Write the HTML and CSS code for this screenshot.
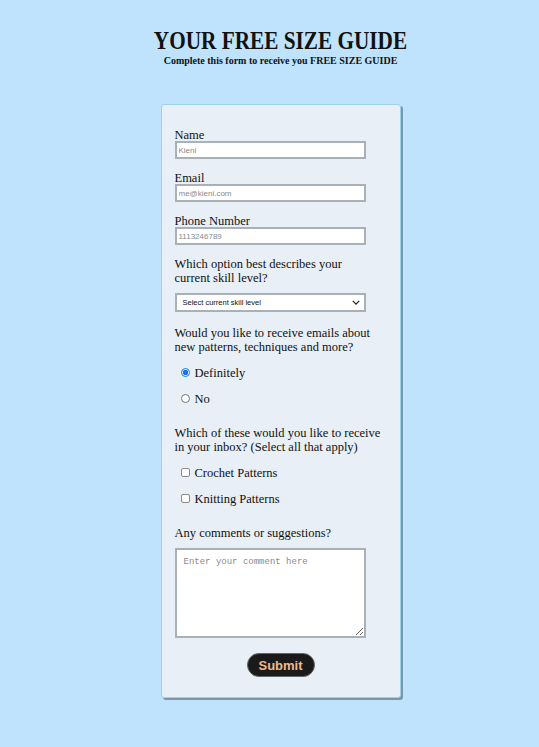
FILE: index.html
```html
<!DOCTYPE html>
<html lang="en">
<head>
<meta charset="utf-8">
<title>Free Size Guide</title>
<link rel="stylesheet" href="styles.css">
</head>
<body>
<header class="header">
  <h1 class="title">YOUR FREE SIZE GUIDE</h1>
  <p class="subtitle">Complete this form to receive you FREE SIZE GUIDE</p>
</header>
<form class="card">
  <div class="field">
    <label class="label" for="name">Name</label>
    <input class="input" id="name" type="text" placeholder="Kieni">
  </div>
  <div class="field">
    <label class="label" for="email">Email</label>
    <input class="input" id="email" type="email" placeholder="me@kieni.com">
  </div>
  <div class="field">
    <label class="label" for="phone">Phone Number</label>
    <input class="input" id="phone" type="tel" placeholder="1113246789">
  </div>
  <div class="field field-select">
    <label class="label" for="skill">Which option best describes your<br>current skill level?</label>
    <div class="select" id="skill">
      <span>Select current skill level</span>
      <svg class="chev" viewBox="0 0 10 6" width="8" height="5"><path d="M1 1l4 4 4-4" fill="none" stroke="#222" stroke-width="1.6"/></svg>
    </div>
  </div>
  <div class="field field-options">
    <p class="label">Would you like to receive emails about new patterns, techniques and more?</p>
    <div class="options">
      <label class="option"><span class="radio checked"></span>Definitely</label>
      <label class="option"><span class="radio"></span>No</label>
    </div>
  </div>
  <div class="field field-options">
    <p class="label">Which of these would you like to receive in your inbox? (Select all that apply)</p>
    <div class="options">
      <label class="option"><span class="check"></span>Crochet Patterns</label>
      <label class="option"><span class="check"></span>Knitting Patterns</label>
    </div>
  </div>
  <div class="field">
    <label class="label" for="comments">Any comments or suggestions?</label>
    <textarea class="textarea" id="comments" placeholder="Enter your comment here"></textarea>
  </div>
  <div class="actions">
    <button class="submit" type="button">Submit</button>
  </div>
</form>
</body>
</html>
```
FILE: styles.css
```css
html, body {
  margin: 0;
  padding: 0;
}
body {
  background: #bfe3fc;
  min-height: 747px;
  padding-left: 22px;
  box-sizing: border-box;
  font-family: "Liberation Serif", serif;
  color: #111;
}
.header {
  text-align: center;
  padding-top: 27px;
}
.title {
  margin: 0;
  font-size: 25px;
  line-height: 28px;
  font-weight: bold;
  transform: scaleX(0.85);
}
.subtitle {
  margin: 0;
  font-size: 10px;
  font-weight: bold;
  line-height: 12px;
}
.card {
  width: 240px;
  box-sizing: border-box;
  margin: 37px auto 0;
  background: #e8eff6;
  border: 1px solid #9fd0ea;
  border-radius: 3px;
  box-shadow: 2px 2px 0 #7d97aa;
  padding: 23px 13px 20px 13px;
  display: flex;
  flex-direction: column;
}
.field {
  display: flex;
  flex-direction: column;
  margin-bottom: 12px;
}
.field-select {
  margin-bottom: 14px;
}
.field-options {
  margin-bottom: 19px;
}
.label {
  margin: 0;
  font-size: 12.5px;
  line-height: 14px;
  color: #111;
}
.input {
  width: 191px;
  height: 18px;
  box-sizing: border-box;
  border: 2px solid #a9b0b6;
  background: #fff;
  font-family: "Liberation Sans", sans-serif;
  font-size: 8px;
  padding: 0 2px;
  margin: -1px 0 0;
}
.input::placeholder,
.textarea::placeholder {
  color: #8a8a8a;
  opacity: 1;
}
.select {
  margin-top: 8px;
  width: 191px;
  height: 19px;
  box-sizing: border-box;
  border: 2px solid #a9b0b6;
  background: #fff;
  display: flex;
  align-items: center;
  justify-content: space-between;
  padding: 0 4px 0 6px;
  font-family: "Liberation Sans", sans-serif;
  font-size: 7.5px;
  color: #111;
}
.options {
  display: flex;
  flex-direction: column;
  padding: 11px 0 0 6px;
  gap: 10px;
}
.option {
  display: flex;
  align-items: center;
  font-size: 12.5px;
  line-height: 16px;
  gap: 5px;
}
.radio {
  width: 9px;
  height: 9px;
  box-sizing: border-box;
  border: 1px solid #767676;
  border-radius: 50%;
  background: #fff;
  margin-top: -2px;
}
.radio.checked {
  border: 1px solid #1a73e8;
  background: radial-gradient(circle, #1a73e8 0 2.5px, #fff 3px);
}
.check {
  width: 9px;
  height: 9px;
  box-sizing: border-box;
  border: 1px solid #8a8a8a;
  border-radius: 2px;
  background: #fff;
  margin-top: -2px;
}
.textarea {
  display: block;
  margin: 8px 0 0;
  width: 191px;
  height: 90px;
  box-sizing: border-box;
  border: 2px solid #a9b0b6;
  background: #fff;
  font-family: "Liberation Mono", monospace;
  font-size: 9px;
  color: #111;
  padding: 7px 7px;
  resize: both;
}
.actions {
  display: flex;
  justify-content: center;
  padding-top: 3px;
}
.submit {
  width: 68px;
  height: 24px;
  border: 1px solid #666;
  border-radius: 12px;
  background: #1a1a1a;
  color: #efb993;
  font-family: "Liberation Sans", sans-serif;
  font-weight: bold;
  font-size: 13px;
  padding: 0;
}
```
